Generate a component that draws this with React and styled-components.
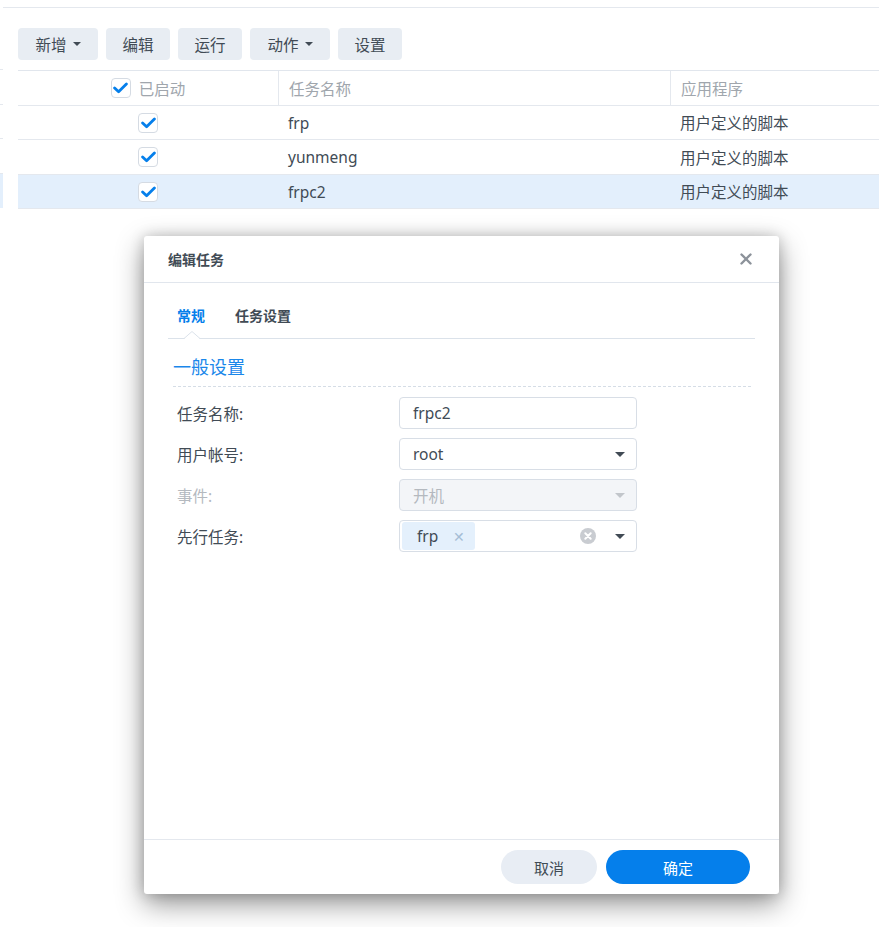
import styled, { createGlobalStyle } from 'styled-components';

const GlobalStyle = createGlobalStyle`
  html, body {
    margin: 0;
    padding: 0;
    background: #fff;
  }
  body {
    font-family: "Noto Sans", "Noto Sans CJK SC", sans-serif;
    color: #414b55;
    font-size: 14px;
  }
`;

const Page = styled.div`
  position: relative;
  width: 879px;
  height: 927px;
  overflow: hidden;
  display: flex;
`;

const SideStrip = styled.div`
  width: 3px;
  padding-top: 69px;
  display: flex;
  flex-direction: column;
`;

const StripCell = styled.div`
  height: ${p => p.$h || 34}px;
  border-top: 1px solid #e4e8ee;
  background: ${p => (p.$active ? '#e3effc' : 'transparent')};
`;

const Main = styled.div`
  flex: 1;
  margin-top: 7px;
  border-top: 1px solid #e4e8ee;
  padding-left: 15px;
`;

const Toolbar = styled.div`
  display: flex;
  gap: 8px;
  margin-top: 20px;
  height: 32px;
`;

const ToolButton = styled.div`
  display: flex;
  align-items: center;
  justify-content: center;
  gap: 6px;
  height: 32px;
  width: ${p => (p.$menu ? '80px' : '64px')};
  background: #e8edf3;
  border-radius: 4px;
  font-size: 15.5px;
  color: #414b55;
  box-sizing: border-box;
`;

const Caret = styled.span`
  width: 0;
  height: 0;
  border-left: ${p => p.$size || 4}px solid transparent;
  border-right: ${p => p.$size || 4}px solid transparent;
  border-top: ${p => p.$size || 4}px solid ${p => p.$color || '#414b55'};
`;

const Table = styled.div`
  margin-top: 10px;
  border-top: 1px solid #e1e6ed;
`;

const Row = styled.div`
  display: grid;
  grid-template-columns: 260px 392px 1fr;
  height: ${p => p.$h}px;
  box-sizing: border-box;
  border-bottom: 1px solid #e4e8ee;
  background: ${p => (p.$selected ? '#e3effc' : 'transparent')};
`;

const Cell = styled.div`
  display: flex;
  align-items: center;
  padding-left: ${p => (p.$center ? '0' : '10px')};
  justify-content: ${p => (p.$center ? 'center' : 'flex-start')};
  border-left: ${p => (p.$divider ? '1px solid #e4e8ee' : 'none')};
  color: ${p => (p.$head ? '#a0a6ad' : '#414b55')};
  font-size: 15.5px;
  gap: 8px;
`;

const Box = styled.span`
  width: 20px;
  height: 20px;
  box-sizing: border-box;
  border: 1px solid #d5dbe3;
  border-radius: 4px;
  background: #fff;
  display: flex;
  align-items: center;
  justify-content: center;
`;

const Check = () => (
  <Box>
    <svg width="15" height="12" viewBox="0 0 15 12">
      <path d="M1.6 6 L5.6 9.8 L13.4 2" fill="none" stroke="#057feb" strokeWidth="2.8" strokeLinecap="round" strokeLinejoin="round" />
    </svg>
  </Box>
);

const Dialog = styled.div`
  position: absolute;
  left: 144px;
  top: 236px;
  width: 635px;
  height: 658px;
  background: #fff;
  border-radius: 3px;
  box-shadow: 0 10px 28px rgba(0, 0, 0, 0.42), 0 0 14px rgba(0, 0, 0, 0.18);
  display: flex;
  flex-direction: column;
`;

const DialogHead = styled.div`
  height: 47px;
  box-sizing: border-box;
  border-bottom: 1px solid #e1e6ed;
  display: flex;
  align-items: center;
  justify-content: space-between;
  padding: 0 27px 0 24px;
`;

const DialogTitle = styled.div`
  font-size: 14px;
  font-weight: 600;
  color: #414b55;
`;

const Body = styled.div`
  flex: 1;
  padding: 0 24px;
`;

const Tabs = styled.div`
  position: relative;
  display: flex;
  gap: 30px;
  height: 56px;
  box-sizing: border-box;
  padding: 25px 0 0 9px;
  border-bottom: 1px solid #dbe2ea;
`;

const Tab = styled.div`
  font-size: 14px;
  font-weight: 700;
  color: ${p => (p.$active ? '#057feb' : '#414b55')};
  line-height: 16px;
`;

const Notch = styled.svg`
  position: absolute;
  left: 16px;
  bottom: -1px;
`;

const SectionTitle = styled.div`
  margin: 16px 4px 0 5px;
  padding-bottom: 6px;
  border-bottom: 1px dashed #d5dde6;
  font-size: 18px;
  color: #1a87ea;
  line-height: 25px;
`;

const Form = styled.div`
  margin-top: 10px;
  display: flex;
  flex-direction: column;
  gap: 9px;
`;

const FormRow = styled.div`
  display: grid;
  grid-template-columns: 222px 238px;
  align-items: center;
  padding-left: 9px;
`;

const Label = styled.div`
  font-size: 15.5px;
  color: ${p => (p.$disabled ? '#b4b9bf' : '#414b55')};
`;

const Field = styled.div`
  height: 32px;
  box-sizing: border-box;
  border: 1px solid #d8dee6;
  border-radius: 4px;
  background: ${p => (p.$disabled ? '#f3f5f8' : '#fff')};
  color: ${p => (p.$disabled ? '#b4b9bf' : '#414b55')};
  display: flex;
  align-items: center;
  padding: 0 11px 0 ${p => (p.$tags ? '2px' : '13px')};
  font-size: 15.5px;
  gap: 8px;
`;

const FieldText = styled.span`
  flex: 1;
`;

const Tag = styled.span`
  display: flex;
  align-items: center;
  gap: 15px;
  height: 28px;
  padding: 0 10px 0 15px;
  background: #e4f0fc;
  border-radius: 3px;
  font-size: 15.5px;
  color: #414b55;
`;

const TagX = styled.span`
  color: #a5bdd6;
  font-size: 14px;
`;

const Spacer = styled.span`
  flex: 1;
`;

const Footer = styled.div`
  height: 55px;
  box-sizing: border-box;
  border-top: 1px solid #e4e8ee;
  display: flex;
  align-items: center;
  justify-content: flex-end;
  gap: 9px;
  padding: 0 29px 0 0;
`;

const PillButton = styled.div`
  height: 34px;
  width: ${p => p.$w}px;
  border-radius: 17px;
  display: flex;
  align-items: center;
  justify-content: center;
  font-size: 15px;
  background: ${p => (p.$primary ? '#057feb' : '#e8edf4')};
  color: ${p => (p.$primary ? '#fff' : '#414b55')};
`;

const rows = [
  { name: 'frp', h: 34 },
  { name: 'yunmeng', h: 35 },
  { name: 'frpc2', h: 34, selected: true },
];

export default function App() {
  return (
    <>
      <GlobalStyle />
      <Page>
        <SideStrip>
          <StripCell $h={34} />
          <StripCell $h={33} />
          <StripCell $h={34} />
          <StripCell $h={34} $active />
        </SideStrip>
        <Main>
          <Toolbar>
            <ToolButton $menu>新增<Caret /></ToolButton>
            <ToolButton>编辑</ToolButton>
            <ToolButton>运行</ToolButton>
            <ToolButton $menu>动作<Caret /></ToolButton>
            <ToolButton>设置</ToolButton>
          </Toolbar>
          <Table>
            <Row $h={35}>
              <Cell $center $head><Check />已启动</Cell>
              <Cell $divider $head>任务名称</Cell>
              <Cell $divider $head>应用程序</Cell>
            </Row>
            {rows.map(r => (
              <Row key={r.name} $h={r.h} $selected={r.selected}>
                <Cell $center><Check /></Cell>
                <Cell>{r.name}</Cell>
                <Cell>用户定义的脚本</Cell>
              </Row>
            ))}
          </Table>
        </Main>

        <Dialog>
          <DialogHead>
            <DialogTitle>编辑任务</DialogTitle>
            <svg width="12" height="12" viewBox="0 0 12 12">
              <path d="M1.5 1.5 L10.5 10.5 M10.5 1.5 L1.5 10.5" stroke="#8c929a" strokeWidth="2.4" strokeLinecap="round" />
            </svg>
          </DialogHead>
          <Body>
            <Tabs>
              <Tab $active>常规</Tab>
              <Tab>任务设置</Tab>
              <Notch width="16" height="8" viewBox="0 0 16 8">
                <path d="M0 7.5 L8 0.5 L16 7.5" fill="#fff" stroke="#dbe2ea" strokeWidth="1" />
                <rect x="1" y="7" width="14" height="1" fill="#fff" />
              </Notch>
            </Tabs>
            <SectionTitle>一般设置</SectionTitle>
            <Form>
              <FormRow>
                <Label>任务名称:</Label>
                <Field><FieldText>frpc2</FieldText></Field>
              </FormRow>
              <FormRow>
                <Label>用户帐号:</Label>
                <Field><FieldText>root</FieldText><Caret $size={5} $color="#414b55" /></Field>
              </FormRow>
              <FormRow>
                <Label $disabled>事件:</Label>
                <Field $disabled><FieldText>开机</FieldText><Caret $size={5} $color="#c2c6cb" /></Field>
              </FormRow>
              <FormRow>
                <Label>先行任务:</Label>
                <Field $tags>
                  <Tag>frp<TagX>✕</TagX></Tag>
                  <Spacer />
                  <svg width="16" height="16" viewBox="0 0 16 16">
                    <circle cx="8" cy="8" r="8" fill="#c9ccd1" />
                    <path d="M5.3 5.3 L10.7 10.7 M10.7 5.3 L5.3 10.7" stroke="#fff" strokeWidth="2" strokeLinecap="round" />
                  </svg>
                  <span style={{ width: 3 }} />
                  <Caret $size={5} $color="#414b55" />
                </Field>
              </FormRow>
            </Form>
          </Body>
          <Footer>
            <PillButton $w={96}>取消</PillButton>
            <PillButton $w={144} $primary>确定</PillButton>
          </Footer>
        </Dialog>
      </Page>
    </>
  );
}
